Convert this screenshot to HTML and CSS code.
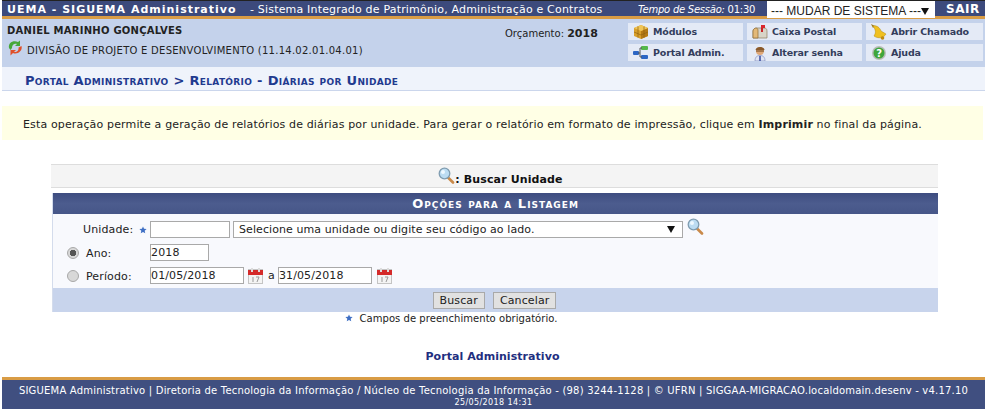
FILE: index.html
```html
<!DOCTYPE html>
<html lang="pt-BR">
<head>
<meta charset="utf-8">
<title>SIGUEMA Administrativo</title>
<link rel="stylesheet" href="styles.css">
</head>
<body>
<header class="topbar">
  <span class="brand">UEMA - SIGUEMA Administrativo</span>
  <span class="system">- Sistema Integrado de Patrimônio, Administração e Contratos</span>
  <span class="session"><em>Tempo de Sessão:</em> 01:30</span>
  <div class="switch"><span>--- MUDAR DE SISTEMA ---</span><i class="caret"></i></div>
  <a class="logout">SAIR</a>
</header>
<section class="userbar">
  <div class="user">
    <div class="user-name">DANIEL MARINHO GONÇALVES</div>
    <div class="user-unit">
      <svg class="unit-icon" viewBox="0 0 16 16"><path d="M2 8C1 3 6 0 11 2L13 0.5V6H8L10 4C7 3 5 5 5 8L3.5 10Z" fill="#46a83a"/><path d="M14.5 6C16 11 10 15 6 13L3.5 15.5V10H9L7 12C10 12.500 12 10 11.500 7.500Z" fill="#e0502a"/></svg>
      <span>DIVISÃO DE PROJETO E DESENVOLVIMENTO (11.14.02.01.04.01)</span>
    </div>
  </div>
  <div class="budget">Orçamento: <b>2018</b></div>
  <nav class="menu">
    <a class="menu-item">
      <svg viewBox="0 0 16 16"><path d="M1 4L8 1L15 4V12L8 15L1 12Z" fill="#d9a02c"/><path d="M8 7L15 4V12L8 15Z" fill="#b57a16"/><path d="M1 4L8 1L15 4L8 7Z" fill="#f0c659"/><path d="M5 2.500V13.500M11 2.500V13.500M1 8L8 11L15 8" stroke="#8f6210" stroke-width=".7" fill="none"/></svg>
      Módulos</a>
    <a class="menu-item">
      <svg viewBox="0 0 16 16"><path d="M1 7C1 5 3 4 5 4H12C14 4 15 5 15 7V14H1Z" fill="#d8d4c8" stroke="#8d7c5c" stroke-width=".7"/><path d="M1 7C1 5 3 4 4 4C6 4 6 6 6 7V14H1Z" fill="#e3b978" stroke="#8d6a34" stroke-width=".7"/><path d="M9 1H11V8H9Z" fill="#c8242a"/><path d="M9 1H13V4H9Z" fill="#d9282e"/></svg>
      Caixa Postal</a>
    <a class="menu-item">
      <svg viewBox="0 0 16 16"><path d="M0 0L4 2L2 4Z" fill="#9a7a20"/><path d="M2 2C6 1 9 4 10 7L15 10C13 14 7 15 3 12C5 9 5 6 2 2Z" fill="#f0c020" stroke="#b08a10" stroke-width=".5"/><circle cx="11.500" cy="14" r="1.800" fill="#c08a10"/></svg>
      Abrir Chamado</a>
    <a class="menu-item">
      <svg viewBox="0 0 16 16"><rect x="0" y="6" width="6" height="4" rx="1" fill="#2c66c4"/><rect x="8" y="1" width="7" height="4" rx="1" fill="#55b84a"/><rect x="8" y="10" width="7" height="4" rx="1" fill="#2c66c4"/><path d="M5 8H7M7 3V12M7 3H9M7 12H9" stroke="#555" fill="none"/></svg>
      Portal Admin.</a>
    <a class="menu-item">
      <svg viewBox="0 0 16 16"><path d="M3 16C3 12 5 10.500 8 10.500S13 12 13 16Z" fill="#dfe4f4" stroke="#7684b8" stroke-width=".6"/><path d="M8 11V16" stroke="#2c3f96" stroke-width="1.400"/><circle cx="8" cy="6" r="4" fill="#e0a878"/><path d="M3.500 5C4 1 12 1 12.500 5Z" fill="#8a5a2c"/><path d="M4 6H12" stroke="#704820"/></svg>
      Alterar senha</a>
    <a class="menu-item">
      <svg viewBox="0 0 16 16"><circle cx="8" cy="8" r="7" fill="#b8bcb8"/><circle cx="8" cy="8" r="5.500" fill="#3fa63a"/><text x="8" y="11.500" class="help-mark" text-anchor="middle">?</text></svg>
      Ajuda</a>
  </nav>
</section>
<div class="crumb">Portal Administrativo &gt; Relatório - Diárias por Unidade</div>
<p class="notice">Esta operação permite a geração de relatórios de diárias por unidade. Para gerar o relatório em formato de impressão, clique em <b>Imprimir</b> no final da página.</p>
<div class="search-title">
  <svg class="lens lens-title" viewBox="0 0 17 17"><use href="#lens"/></svg><span>: Buscar Unidade</span>
</div>
<form class="panel">
  <h2 class="panel-head">Opções para a Listagem</h2>
  <div class="panel-body">
    <div class="row row-unit">
      <label class="label-unit">Unidade:</label>
      <svg class="star" viewBox="0 0 10 10"><path d="M5 0.500L6.300 3.500L9.500 3.800L7.100 5.900L7.800 9.200L5 7.500L2.200 9.200L2.900 5.900L0.500 3.800L3.700 3.500Z"/></svg>
      <span class="field field-code"></span>
      <div class="field field-select"><span>Selecione uma unidade ou digite seu código ao lado.</span><i class="caret"></i></div>
      <svg class="lens lens-form" viewBox="0 0 17 17">
        <symbol id="lens" viewBox="0 0 17 17">
          <path d="M9.500 10L15 15.500" stroke="#c98a4a" stroke-width="2.600" stroke-linecap="round"/>
          <circle cx="6.500" cy="6.500" r="5.300" fill="#bcdcf2" stroke="#7f9cb0" stroke-width="1.300"/>
          <circle cx="5" cy="5" r="2" fill="#eef8ff"/>
        </symbol>
        <use href="#lens"/>
      </svg>
    </div>
    <div class="row">
      <span class="radio radio-on"></span><label class="label-radio">Ano:</label>
      <span class="field field-year">2018</span>
    </div>
    <div class="row">
      <span class="radio"></span><label class="label-radio">Período:</label>
      <span class="field field-date">01/05/2018</span>
      <svg class="cal" viewBox="0 0 15 16"><rect x=".5" y="1.500" width="14" height="14" fill="#f4f4f4" stroke="#c4c4c4"/><rect x="0" y="2" width="15" height="5" fill="#d42a2a"/><rect x="3" y="0" width="2" height="4" fill="#ddd"/><rect x="10" y="0" width="2" height="4" fill="#ddd"/><path d="M5 9V14M8 9H11L9 14" stroke="#999" fill="none"/></svg>
      <span class="sep">a</span>
      <span class="field field-date">31/05/2018</span>
      <svg class="cal" viewBox="0 0 15 16"><rect x=".5" y="1.500" width="14" height="14" fill="#f4f4f4" stroke="#c4c4c4"/><rect x="0" y="2" width="15" height="5" fill="#d42a2a"/><rect x="3" y="0" width="2" height="4" fill="#ddd"/><rect x="10" y="0" width="2" height="4" fill="#ddd"/><path d="M5 9V14M8 9H11L9 14" stroke="#999" fill="none"/></svg>
    </div>
  </div>
  <div class="panel-foot">
    <button type="button" class="btn">Buscar</button>
    <button type="button" class="btn">Cancelar</button>
  </div>
</form>
<p class="required"><svg class="star" viewBox="0 0 10 10"><path d="M5 0.500L6.300 3.500L9.500 3.800L7.100 5.900L7.800 9.200L5 7.500L2.200 9.200L2.900 5.900L0.500 3.800L3.700 3.500Z"/></svg> Campos de preenchimento obrigatório.</p>
<a class="portal-link">Portal Administrativo</a>
<footer class="footer">
  <div>SIGUEMA Administrativo | Diretoria de Tecnologia da Informação / Núcleo de Tecnologia da Informação - (98) 3244-1128 | © UFRN | SIGGAA-MIGRACAO.localdomain.desenv - v4.17.10</div>
  <div class="stamp">25/05/2018 14:31</div>
</footer>
</body>
</html>
```
FILE: styles.css
```css
* { box-sizing: border-box; }
html, body { margin: 0; padding: 0; }
body {
  width: 985px;
  height: 409px;
  overflow: hidden;
  background: #fff;
  font: 11px "DejaVu Sans", Verdana, sans-serif;
  letter-spacing: .13px;
  color: #222;
}
.topbar {
  display: flex;
  align-items: center;
  height: 19px;
  margin-left: 2px;
  padding-top: 1px;
  border-top: 1px solid #222;
  border-bottom: 3px solid #d99c45;
  background: #3c4a7c;
  color: #fff;
}
.brand {
  width: 248px;
  padding-left: 5px;
  font-weight: bold;
  font-size: 11px;
  letter-spacing: 1px;
  white-space: nowrap;
}
.system { width: 388px; font-size: 11px; letter-spacing: .18px; white-space: nowrap; }
.session { width: 129px; font-size: 10px; letter-spacing: -.25px; white-space: nowrap; }
.switch {
  display: flex;
  align-items: center;
  justify-content: space-between;
  align-self: flex-start;
  width: 168px;
  height: 17px;
  margin-top: -1px;
  padding: 3px 6px 0 4px;
  background: #fff;
  color: #222;
  font: 12px "Liberation Sans", Arial, sans-serif;
  letter-spacing: 0;
  white-space: nowrap;
}
.caret {
  width: 0;
  height: 0;
  border-left: 4px solid transparent;
  border-right: 4px solid transparent;
  border-top: 7px solid #111;
}
.logout { margin-left: 11px; font-weight: bold; font-size: 12px; letter-spacing: .5px; }
.userbar {
  display: flex;
  height: 48px;
  margin-left: 2px;
  padding-top: 4px;
  background: #c4d2eb;
}
.user { width: 503px; padding: 1px 0 0 5px; }
.user-name { font-weight: bold; font-size: 10px; line-height: 13px; letter-spacing: .25px; }
.user-unit { display: flex; align-items: center; margin-top: 8px; font-size: 10px; letter-spacing: .26px; white-space: nowrap; }
.unit-icon { width: 16px; height: 16px; margin-right: 4px; margin-top: -5px; flex: none; }
.budget { width: 123px; padding-top: 4px; font-size: 10px; letter-spacing: 0; }
.budget b { font-size: 11px; }
.menu {
  display: grid;
  grid-template-columns: 115px 115px 117px;
  grid-auto-rows: 17px;
  gap: 4px;
}
.menu-item {
  display: flex;
  align-items: center;
  gap: 4px;
  padding-left: 5px;
  background: #e4eaf6;
  color: #333d5c;
  font-size: 9.5px;
  font-weight: bold;
  letter-spacing: -.15px;
  white-space: nowrap;
}
.menu-item svg { width: 16px; height: 16px; flex: none; }
.help-mark { font: bold 10px "DejaVu Sans", sans-serif; fill: #fff; }
.crumb {
  height: 24px;
  margin-left: 2px;
  padding: 6px 0 0 23px;
  background: #eff3fb;
  border-bottom: 1px solid #cbd6ec;
  color: #1f3a8f;
  font-size: 13px;
  font-weight: bold;
  font-variant: small-caps;
  letter-spacing: .32px;
  white-space: nowrap;
}
.notice {
  height: 34px;
  margin: 15px 2px 0;
  padding: 12px 0 0 21px;
  background: #ffffe5;
  color: #222;
  font-size: 11px;
  letter-spacing: .145px;
  white-space: nowrap;
}
.search-title {
  display: flex;
  justify-content: center;
  align-items: center;
  height: 24px;
  margin: 24px 47px 0 51px;
  padding: 6px 0 0 12px;
  background: #f4f4f4;
  border-top: 1px solid #ddd;
  border-bottom: 1px solid #ddd;
  font-weight: bold;
  font-size: 11px;
  color: #111;
}
.lens { display: block; }
.lens-title { width: 17px; height: 17px; margin-top: -8px; }
.lens-form { width: 17px; height: 17px; margin: -6px 0 0 4px; }
.panel {
  margin: 5px 47px 0 52px;
  background: #f8f9fd;
  border-left: 1px solid #d4dcec;
}
.panel-head {
  height: 21px;
  margin: 0;
  background: linear-gradient(#3e4c80, #4c5c8e 50%, #465688);
  color: #fff;
  font-size: 13px;
  font-weight: bold;
  font-variant: small-caps;
  letter-spacing: 1px;
  line-height: 21px;
  text-align: center;
}
.panel-body {
  display: flex;
  flex-direction: column;
  gap: 6px;
  height: 74px;
  padding: 7px 0 0 14px;
}
.row { display: flex; align-items: center; height: 17px; }
.label-unit { width: 53px; margin-left: 16px; text-align: left; color: #222; }
.row-unit .star { margin: 0 3px 0 3px; }
.star { width: 8px; height: 8px; fill: #3f6fc4; }
.field {
  display: block;
  height: 17px;
  border: 1px solid #a9a9a9;
  background: #fff;
  color: #222;
  line-height: 16px;
  padding-left: 0;
  font-size: 11px;
}
.field-code { width: 80px; }
.field-select {
  display: flex;
  align-items: center;
  justify-content: space-between;
  width: 450px;
  margin-left: 3px;
  padding: 0 7px 0 5px;
  letter-spacing: .085px;
}
.field-year { width: 59px; }
.field-date { width: 94px; }
.radio {
  width: 12px;
  height: 12px;
  border-radius: 50%;
  background: #d8d8d8;
  border: 1px solid #a8a8a8;
  flex: none;
}
.radio-on { background: radial-gradient(circle, #555 0 3px, #d8d8d8 3.500px); }
.label-radio { width: 64px; margin-left: 7px; padding-top: 1px; }
.cal { width: 15px; height: 16px; margin-left: 4px; }
.sep ~ .cal { margin-left: 5px; }
.sep { margin: 0 3px 0 5px; }
.panel-foot {
  display: flex;
  justify-content: center;
  gap: 8px;
  align-items: center;
  height: 24px;
  padding-right: 2px;
  background: #c8d4ec;
}
.btn {
  height: 17px;
  padding: 0 6px;
  border: 1px solid #a9a9a9;
  background: #e1e1e1;
  color: #222;
  font: 11px "DejaVu Sans", sans-serif;
  letter-spacing: .13px;
  line-height: 13px;
}
.required {
  display: flex;
  justify-content: center;
  align-items: center;
  gap: 6px;
  height: 12px;
  margin: 0;
  padding: 0 82px 0 0;
  font-size: 10px;
  letter-spacing: .05px;
  color: #222;
}
.portal-link {
  display: block;
  margin-top: 26px;
  text-align: center;
  font-weight: bold;
  font-size: 11px;
  letter-spacing: .05px;
  color: #1f2f80;
  line-height: 14px;
}
.footer {
  height: 32px;
  margin: 13px 0 0 2px;
  padding-top: 4px;
  border-top: 3px solid #d99c45;
  background: #404f80;
  color: #fff;
  font-size: 10px;
  letter-spacing: .2px;
  line-height: 14px;
  text-align: center;
}
.stamp { font-size: 8px; line-height: 9px; letter-spacing: .4px; }
```
